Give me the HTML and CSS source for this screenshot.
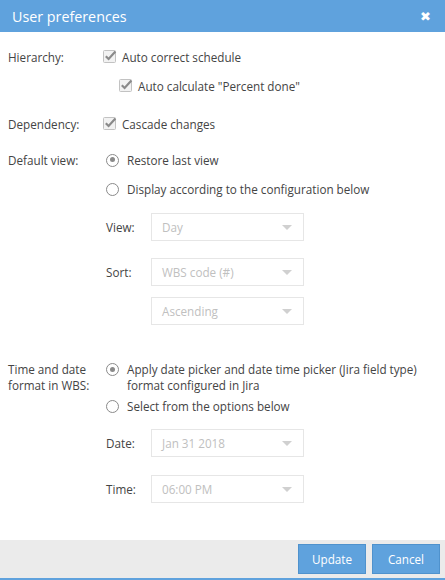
FILE: index.html
```html
<!DOCTYPE html>
<html>
<head>
<meta charset="utf-8">
<link rel="stylesheet" href="styles.css">
</head>
<body>
<div class="dialog">
  <div class="header">
    <span class="title">User preferences</span>
    <span class="close">&#10006;</span>
  </div>
  <div class="content">
    <div class="row r-hier">
      <div class="label">Hierarchy:</div>
      <div class="opt"><svg class="cb" width="14" height="14" viewBox="0 0 14 14"><rect x="0.5" y="1.5" width="12" height="12" rx="1" fill="#f2f2f2" stroke="#c2c2c2"/><path d="M2.8 7.2 L5.6 10 L12.4 2.6" fill="none" stroke="#8a8a8a" stroke-width="2.2"/></svg><span>Auto correct schedule</span></div>
    </div>
    <div class="row r-sub">
      <div class="label"></div>
      <div class="opt indent"><svg class="cb" width="14" height="14" viewBox="0 0 14 14"><rect x="0.5" y="1.5" width="12" height="12" rx="1" fill="#f2f2f2" stroke="#c2c2c2"/><path d="M2.8 7.2 L5.6 10 L12.4 2.6" fill="none" stroke="#8a8a8a" stroke-width="2.2"/></svg><span>Auto calculate "Percent done"</span></div>
    </div>
    <div class="row r-dep">
      <div class="label">Dependency:</div>
      <div class="opt"><svg class="cb" width="14" height="14" viewBox="0 0 14 14"><rect x="0.5" y="1.5" width="12" height="12" rx="1" fill="#f2f2f2" stroke="#c2c2c2"/><path d="M2.8 7.2 L5.6 10 L12.4 2.6" fill="none" stroke="#8a8a8a" stroke-width="2.2"/></svg><span>Cascade changes</span></div>
    </div>
    <div class="row r-dv">
      <div class="label">Default view:</div>
      <div class="opt"><span class="radio on"></span><span>Restore last view</span></div>
    </div>
    <div class="row r-tight">
      <div class="label"></div>
      <div class="opt"><span class="radio"></span><span>Display according to the configuration below</span></div>
    </div>
    <div class="row r-sel1">
      <div class="label"></div>
      <div class="field"><span class="flabel">View:</span><div class="select"><span>Day</span><i class="tri"></i></div></div>
    </div>
    <div class="row r-sel2">
      <div class="label"></div>
      <div class="field"><span class="flabel">Sort:</span><div class="select"><span>WBS code (#)</span><i class="tri"></i></div></div>
    </div>
    <div class="row r-sel3">
      <div class="label"></div>
      <div class="field"><span class="flabel"></span><div class="select"><span>Ascending</span><i class="tri"></i></div></div>
    </div>
    <div class="row r-tdf">
      <div class="label">Time and date format in WBS:</div>
      <div class="opt top"><span class="radio on"></span><span>Apply date picker and date time picker (Jira field type) format configured in Jira</span></div>
    </div>
    <div class="row r-sel-opt">
      <div class="label"></div>
      <div class="opt"><span class="radio"></span><span>Select from the options below</span></div>
    </div>
    <div class="row r-sel1b">
      <div class="label"></div>
      <div class="field"><span class="flabel">Date:</span><div class="select"><span>Jan 31 2018</span><i class="tri"></i></div></div>
    </div>
    <div class="row r-sel2b">
      <div class="label"></div>
      <div class="field"><span class="flabel">Time:</span><div class="select"><span>06:00 PM</span><i class="tri"></i></div></div>
    </div>
  </div>
  <div class="footer">
    <button class="btn">Update</button>
    <button class="btn">Cancel</button>
  </div>
</div>
</body>
</html>
```
FILE: styles.css
```css
* { box-sizing: border-box; }
html, body { margin: 0; padding: 0; }
body {
  font-family: "Open Sans", "Liberation Sans", sans-serif;
  font-size: 11.7px;
  color: #444;
  background: #fff;
}
.dialog {
  width: 445px;
  height: 580px;
  display: flex;
  flex-direction: column;
}
.header {
  height: 32px;
  background: #5fa2dd;
  color: #fff;
  display: flex;
  align-items: center;
  justify-content: space-between;
  padding: 0 14px 0 12px;
}
.title { font-size: 14.3px; }
.close { font-size: 13px; line-height: 1; }
.content {
  flex: 1;
  padding: 0 8px;
}
.row {
  display: flex;
  line-height: 16px;
}
.label { width: 95px; flex: none; }
.opt { display: flex; align-items: center; }
.opt.top { align-items: flex-start; }
.opt.top .radio { margin-top: 2px; }
.opt.indent { padding-left: 16px; }
.cb { flex: none; margin-right: 5px; margin-top: -2px; }
.radio {
  flex: none;
  width: 13px;
  height: 13px;
  border: 1.5px solid #8a8a8a;
  border-radius: 50%;
  margin: 0 8px 0 3px;
  position: relative;
}
.radio.on::after {
  content: "";
  position: absolute;
  left: 2.5px; top: 2.5px;
  width: 5px; height: 5px;
  border-radius: 50%;
  background: #8a8a8a;
}
.r-hier { margin-top: 17px; }
.r-sub { margin-top: 13px; }
.r-dep { margin-top: 22px; }
.r-dv { margin-top: 20px; }
.r-tight { margin-top: 13px; }
.r-sel1 { margin-top: 16px; }
.r-sel2 { margin-top: 17px; }
.r-sel3 { margin-top: 11px; }
.r-tdf { margin-top: 36px; }
.r-tdf .label { width: 95px; padding-right: 4px; }
.r-sel-opt { margin-top: 5px; }
.r-sel1b { margin-top: 15px; }
.r-sel2b { margin-top: 18px; }
.field { display: flex; align-items: center; }
.flabel { width: 48px; flex: none; padding-left: 3px; }
.select {
  width: 153px;
  height: 28px;
  border: 1px solid #e6e6e6;
  display: flex;
  align-items: center;
  justify-content: space-between;
  padding: 0 11px 0 10px;
  color: #c0c0c0;
}
.tri {
  width: 0; height: 0;
  border-left: 5px solid transparent;
  border-right: 5px solid transparent;
  border-top: 5px solid #d0d0d0;
}
.footer {
  height: 40px;
  background: #ebebeb;
  border-bottom: 2px solid #5fa2dd;
  display: flex;
  justify-content: flex-end;
  align-items: center;
  gap: 6px;
  padding: 0 5px 0 0;
}
.btn {
  width: 68px;
  height: 30px;
  background: #5fa2dd;
  border: 1px solid #4f92cd;
  color: #fff;
  font-family: "Open Sans", "Liberation Sans", sans-serif;
  font-size: 11.7px;
  padding: 0;
}
```
